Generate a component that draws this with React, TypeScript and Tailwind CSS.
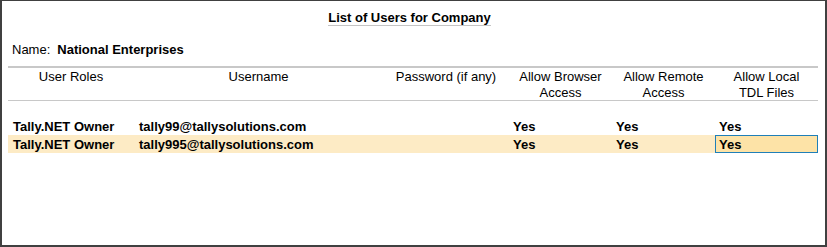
// List of Users for Company - Tally style report

const cols = "grid grid-cols-[126px_249px_126px_103px_103px_103px]";

const users = [
  { role: "Tally.NET Owner", username: "tally99@tallysolutions.com", password: "", browser: "Yes", remote: "Yes", tdl: "Yes" },
  { role: "Tally.NET Owner", username: "tally995@tallysolutions.com", password: "", browser: "Yes", remote: "Yes", tdl: "Yes" },
];

export default function App() {
  const selected = 1;

  return (
    <div
      className="w-[827px] h-[247px] bg-white border-t border-l-2 border-r-2 border-b-2 border-[#404040] text-[13px] text-black overflow-hidden"
      style={{ fontFamily: '"Liberation Sans", Arial, sans-serif' }}
    >
      {/* Title */}
      <div className="pt-[9px] flex justify-center">
        <span className="inline-block font-bold leading-[15px] border-b border-[#c4c4c4] mr-[8px]">
          List of Users for Company
        </span>
      </div>

      {/* Company name */}
      <div className="mt-[16px] pl-[10px] leading-[16px] flex">
        <span>Name:</span>
        <span className="ml-[7px] font-bold">National Enterprises</span>
      </div>

      {/* Table */}
      <div className="ml-[6px] w-[810px] mt-[8px]">
        <div className={`${cols} border-t-2 border-b border-[#c8c8c8] leading-[16px] h-[35px] pt-[1px] text-center`}>
          <div>User Roles</div>
          <div>Username</div>
          <div>Password (if any)</div>
          <div>Allow Browser<br />Access</div>
          <div>Allow Remote<br />Access</div>
          <div>Allow Local<br />TDL Files</div>
        </div>

        <div className="mt-[16px]">
          {users.map((u, i) => {
            const active = i === selected;
            return (
              <div
                key={i}
                className={`${cols} h-[18px] leading-[18px] pt-[1px] font-bold ${active ? "bg-[#fdebc5]" : ""}`}
              >
                <div className="pl-[5px] whitespace-nowrap">{u.role}</div>
                <div className="pl-[5px] whitespace-nowrap">{u.username}</div>
                <div className="pl-[5px]">{u.password}</div>
                <div className="pl-[4px]">{u.browser}</div>
                <div className="pl-[4px]">{u.remote}</div>
                {active ? (
                  <div className="pl-[3px] -mt-[1px] h-[18px] leading-[17px] border border-[#1f7fb8] bg-[#fde3a7]">{u.tdl}</div>
                ) : (
                  <div className="pl-[4px]">{u.tdl}</div>
                )}
              </div>
            );
          })}
        </div>
      </div>
    </div>
  );
}
